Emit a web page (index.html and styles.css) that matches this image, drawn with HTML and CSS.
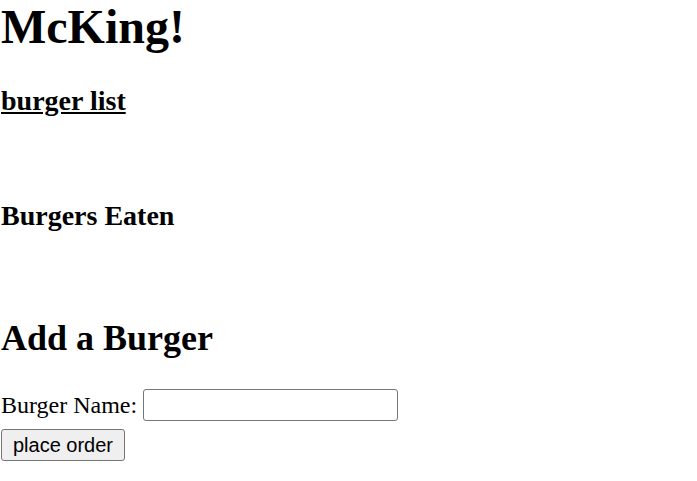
FILE: index.html
```html
<!DOCTYPE html>
<html lang="en">
<head>
<meta charset="utf-8">
<title>McKing!</title>
<link rel="stylesheet" href="styles.css">
</head>
<body>
<h1 class="title">McKing!</h1>
<h3 class="section-title"><a class="list-link" href="#">burger list</a></h3>
<ul class="burger-list"></ul>
<h3 class="section-title eaten-title">Burgers Eaten</h3>
<ul class="burger-list"></ul>
<h2 class="add-title">Add a Burger</h2>
<form class="burger-form">
  <div class="form-row">
    <label class="form-label" for="burger-name">Burger Name:</label>
    <input class="form-input" type="text" id="burger-name">
  </div>
  <button class="form-button" type="submit">place order</button>
</form>
</body>
</html>
```

FILE: styles.css
```css
html, body {
  background: #ffffff;
}
body {
  margin: 0;
  padding: 0 0 0 1px;
  font-family: "Liberation Serif", "Times New Roman", serif;
  color: #000000;
}
.title {
  margin: 0;
  font-size: 48px;
  line-height: 53px;
  font-weight: bold;
}
.section-title {
  margin: 32px 0 0;
  font-size: 28px;
  line-height: 31px;
  font-weight: bold;
}
.list-link {
  color: #000000;
  text-decoration: underline;
}
.burger-list {
  margin: 0;
  padding: 0;
  list-style: none;
}
.eaten-title {
  margin-top: 84px;
}
.add-title {
  margin: 87px 0 0;
  font-size: 36px;
  line-height: 40px;
  font-weight: bold;
}
.burger-form {
  margin-top: 31px;
  display: flex;
  flex-direction: column;
  align-items: flex-start;
  gap: 8px;
}
.form-row {
  display: flex;
  align-items: center;
  gap: 6px;
}
.form-label {
  font-size: 24px;
  line-height: 28px;
}
.form-input {
  box-sizing: border-box;
  width: 255px;
  height: 32px;
  margin: 0;
  padding: 2px 3px;
  border: 1.5px solid #767676;
  border-radius: 3px;
  background: #ffffff;
  font-family: "Liberation Sans", Arial, sans-serif;
  font-size: 20px;
}
.form-button {
  box-sizing: border-box;
  width: 124px;
  height: 32px;
  margin: 0;
  padding: 0 9px;
  border: 1.5px solid #767676;
  border-radius: 3px;
  background: #efefef;
  color: #000000;
  font-family: "Liberation Sans", Arial, sans-serif;
  font-size: 20px;
}
```
